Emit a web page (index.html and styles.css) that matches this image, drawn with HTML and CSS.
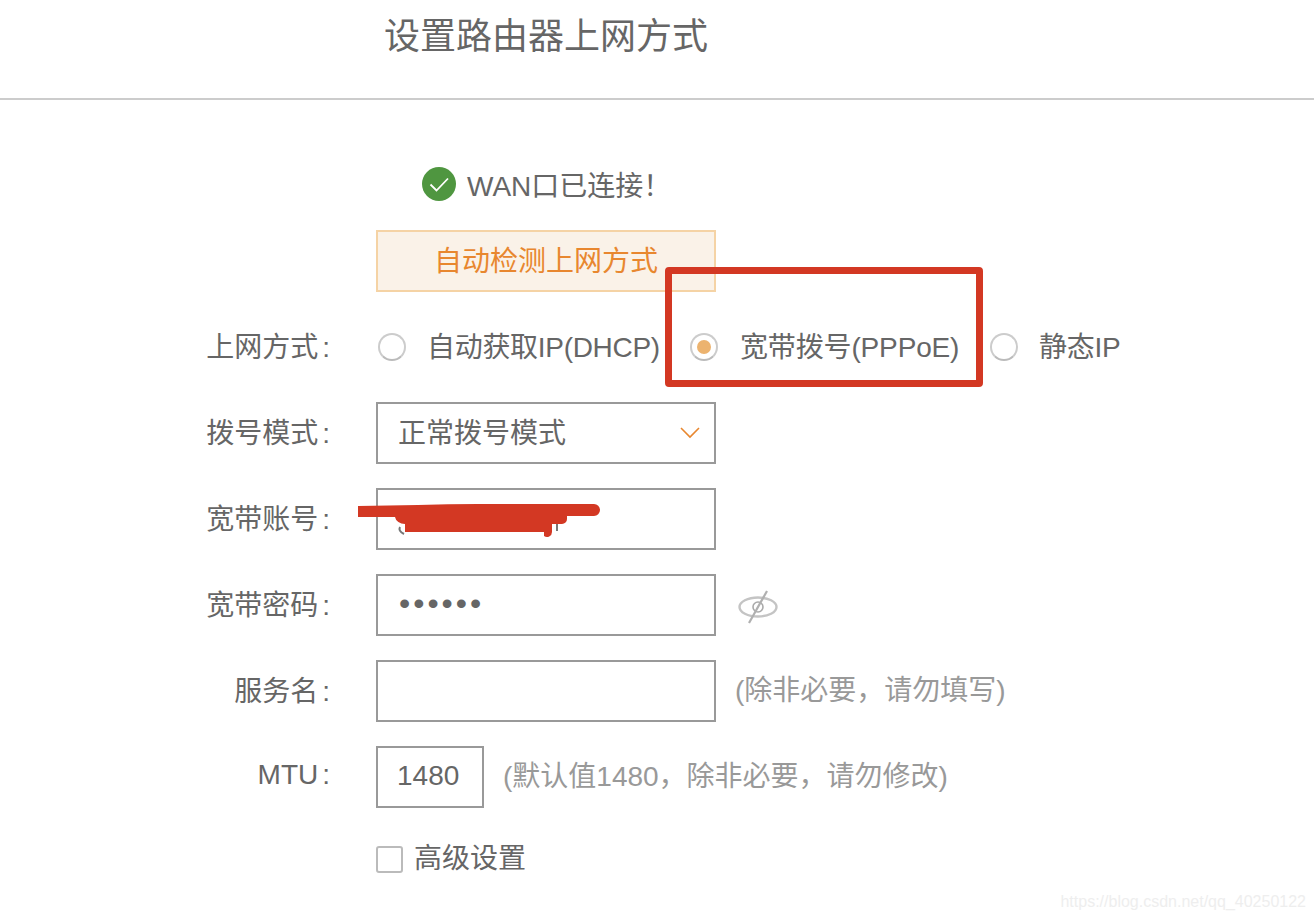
FILE: index.html
```html
<!DOCTYPE html>
<html>
<head>
    <meta charset="utf-8">
    <link rel="stylesheet" href="styles.css">
</head>
<body>
    <div class="page">
        <div class="header">
            <h1 class="title">设置路由器上网方式</h1>
        </div>

        <div class="content">
            <div class="row status-row">
                <svg class="check-icon" viewBox="0 0 34 34">
                    <circle cx="17" cy="17" r="17" fill="#4f9640"/>
                    <path d="M8.5 17.5l6 6L26 11.5" fill="none" stroke="#fff" stroke-width="1.8"/>
                </svg>
                <span>WAN口已连接&#xFF01;</span>
            </div>

            <div class="row">
                <div class="label"></div>
                <button class="detect-btn">自动检测上网方式</button>
            </div>

            <div class="row">
                <div class="label">上网方式<span class="colon">:</span></div>
                <div class="radio-group">
                    <span class="radio"></span>
                    <span class="radio-text first">自动获取IP(DHCP)</span>
                    <span class="radio checked"></span>
                    <span class="radio-text second">宽带拨号(PPPoE)</span>
                    <span class="radio"></span>
                    <span class="radio-text third">静态IP</span>
                </div>
            </div>

            <div class="row">
                <div class="label">拨号模式<span class="colon">:</span></div>
                <div class="field select">
                    <span>正常拨号模式</span>
                    <svg class="chevron" viewBox="0 0 20 12">
                        <path d="M1 1l9 9 9-9" fill="none" stroke="#e8872f" stroke-width="1.6"/>
                    </svg>
                </div>
            </div>

            <div class="row">
                <div class="label">宽带账号<span class="colon">:</span></div>
                <div class="field"></div>
            </div>

            <div class="row">
                <div class="label">宽带密码<span class="colon">:</span></div>
                <div class="field password">••••••</div>
                <svg class="eye-icon" viewBox="0 0 40 34">
                    <ellipse cx="20" cy="17" rx="18.5" ry="9.5" fill="none" stroke="#c4c4c4" stroke-width="2.4"/>
                    <circle cx="20" cy="17" r="5" fill="none" stroke="#aaa" stroke-width="1.6"/>
                    <path d="M29 1L11 33" stroke="#b0b0b0" stroke-width="2.2"/>
                </svg>
            </div>

            <div class="row">
                <div class="label">服务名<span class="colon">:</span></div>
                <div class="field"></div>
                <span class="hint">(除非必要&#xFF0C;请勿填写)</span>
            </div>

            <div class="row">
                <div class="label">MTU<span class="colon">:</span></div>
                <div class="field mtu">1480</div>
                <span class="hint">(默认值1480&#xFF0C;除非必要&#xFF0C;请勿修改)</span>
            </div>

            <div class="row advanced-row">
                <div class="label"></div>
                <span class="checkbox"></span>
                <span class="advanced-text">高级设置</span>
            </div>
        </div>

        <!-- red marks drawn over the screenshot -->
        <div class="red-box"></div>
        <svg class="scribble" viewBox="0 0 260 40">
            <path d="M42 23q-2 4 4 7" fill="none" stroke="#777" stroke-width="2"/>
            <path d="M199 18v9" fill="none" stroke="#777" stroke-width="2"/>
            <path fill="#d33823" d="M0 2L60 1Q90 0 120 0L236 0a6 6 0 0 1 0 12L209 12V15a5 5 0 0 1-5 5L194 20V28a5 5 0 0 1-8 4L186 28L47 28V20a10 8 0 0 1-10-7L0 13Z"/>
        </svg>
        <div class="watermark">https://blog.csdn.net/qq_40250122</div>
    </div>
</body>
</html>
```

FILE: styles.css
```css
* {
    box-sizing: border-box;
}

body {
    margin: 0;
    background-color: #fff;
    color: #666;
    font-family: "Liberation Sans", "Noto Sans CJK SC", sans-serif;
    font-size: 28px;
}

.page {
    position: relative;
    height: 922px;
    overflow: hidden;
}

.header {
    height: 100px;
    padding-left: 384px;
    border-bottom: 2px solid #ccc;
}

.title {
    margin: 0;
    padding-top: 11px;
    font-size: 36px;
    font-weight: normal;
    line-height: 52px;
}

.content {
    padding-left: 206px;
}

.row {
    display: flex;
    align-items: center;
    height: 62px;
    margin-top: 24px;
}

/* the margin-bottom lifts the text to the centre of its row */
.label,
.radio-text {
    margin-bottom: 4px;
}

.label {
    width: 124px;
    margin-right: 46px;
    text-align: right;
    flex-shrink: 0;
}

.colon {
    margin-left: 4px;
}

.status-row {
    height: 34px;
    margin-top: 67px;
    padding-left: 216px;
}

.status-row + .row {
    margin-top: 29px;
}

.check-icon {
    width: 34px;
    height: 34px;
    margin-right: 11px;
}

.detect-btn {
    width: 340px;
    height: 62px;
    padding: 0 0 4px;
    background-color: #faf2e8;
    border: 2px solid #f5d3a5;
    color: #e8872f;
    font-family: inherit;
    font-size: 28px;
}

.radio-group {
    display: flex;
    align-items: center;
    padding-left: 2px;
}

.radio {
    display: flex;
    align-items: center;
    justify-content: center;
    width: 28px;
    height: 28px;
    border: 2px solid #ccc;
    border-bottom-color: #bbb;
    border-radius: 50%;
    background-color: #fff;
    flex-shrink: 0;
}

.radio.checked::after {
    content: "";
    width: 14px;
    height: 14px;
    border-radius: 50%;
    background-color: #ecb36f;
}

.radio-text {
    margin-left: 22px;
    white-space: nowrap;
    letter-spacing: -0.3px;
}

.radio-text.first {
    width: 263px;
    margin-left: 21px;
}

.radio-text.second {
    width: 250px;
    letter-spacing: -0.15px;
}

.radio-text.third {
    margin-left: 21px;
}

.field {
    display: flex;
    align-items: center;
    width: 340px;
    height: 62px;
    padding: 0 0 4px 20px;
    border: 2px solid #999;
    background-color: #fff;
}

.select {
    justify-content: space-between;
    padding-right: 14px;
}

.chevron {
    width: 20px;
    height: 12px;
    margin-top: 4px;
}

.password {
    font-size: 32px;
    letter-spacing: 3px;
    padding-left: 21px;
}

.eye-icon {
    width: 40px;
    height: 34px;
    margin: 4px 0 0 22px;
}

.hint {
    margin: 0 0 6px 19px;
    color: #999;
    white-space: nowrap;
}

.mtu {
    width: 108px;
    padding: 0 0 2px 19px;
}

.advanced-row {
    height: 28px;
    margin-top: 37px;
}

.advanced-text {
    margin-bottom: 6px;
}

.checkbox {
    width: 27px;
    height: 27px;
    margin-right: 11px;
    border: 2px solid #bbb;
    border-radius: 3px;
}

.red-box {
    position: absolute;
    left: 665px;
    top: 267px;
    width: 318px;
    height: 120px;
    border: 7px solid #d33823;
    border-radius: 4px;
}

.scribble {
    position: absolute;
    left: 358px;
    top: 504px;
    width: 260px;
    height: 40px;
}

.watermark {
    position: absolute;
    right: 8px;
    top: 893px;
    color: #eee;
    font-size: 16px;
}
```
